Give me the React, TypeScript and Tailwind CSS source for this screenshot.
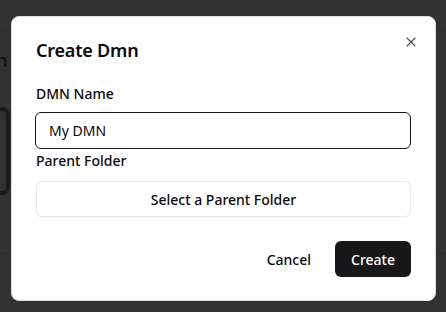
import React from "react";
import { X } from "lucide-react";

export default function App() {
  return (
    <div
      className="relative w-[446px] h-[312px] overflow-hidden bg-[#323232]"
      style={{ fontFamily: '"Noto Sans", "Open Sans", sans-serif' }}
    >
      {/* dimmed page behind */}
      <div className="flex flex-col">
        <div className="h-[31px] border-b border-[#2b2b2b]" />
        <div className="-ml-[52px] mt-[15px] text-[18px] leading-7 font-medium text-[#0e0e0e]">Design</div>
        <div className="-ml-[20px] mt-[33px] w-[30px] h-[88px] rounded-[8px] border-[4px] border-[#1b1b1b] bg-[#313131]" />
        <div className="mt-[58px] border-b border-[#2b2b2b]" />
      </div>

      {/* dialog */}
      <div className="absolute left-[11px] top-[16px] w-[425px] rounded-[8px] border border-[#dcdcdc] bg-white p-6 pb-[23px] text-[#09090b]">
        <button className="absolute right-[16px] top-[17px] text-[#4a4a4a]">
          <X size={16} strokeWidth={1.6} />
        </button>
        <h2 className="text-[18px] leading-[18px] font-semibold tracking-[-0.2px]">Create Dmn</h2>
        <div className="mt-[25px] flex flex-col">
          <label className="text-[14px] leading-5 font-medium">DMN Name</label>
          <div className="mt-[8px] -ml-px h-[37px] rounded-[6px] border border-[#18181b] flex items-center px-[13px] text-[14px]">
            My DMN
          </div>
          <label className="mt-[2px] text-[14px] leading-5 font-medium">Parent Folder</label>
          <button className="mt-[10px] h-9 w-full rounded-[6px] border border-[#e8e8e8] bg-white text-[14px] font-medium shadow-[0_1px_2px_rgba(0,0,0,0.04)]">
            Select a Parent Folder
          </button>
        </div>
        <div className="mt-[24px] flex justify-end gap-2">
          <button className="h-9 px-4 rounded-[6px] text-[14px] font-medium">Cancel</button>
          <button className="h-9 px-4 rounded-[6px] bg-[#18181b] text-white text-[14px] font-medium">Create</button>
        </div>
      </div>
    </div>
  );
}
